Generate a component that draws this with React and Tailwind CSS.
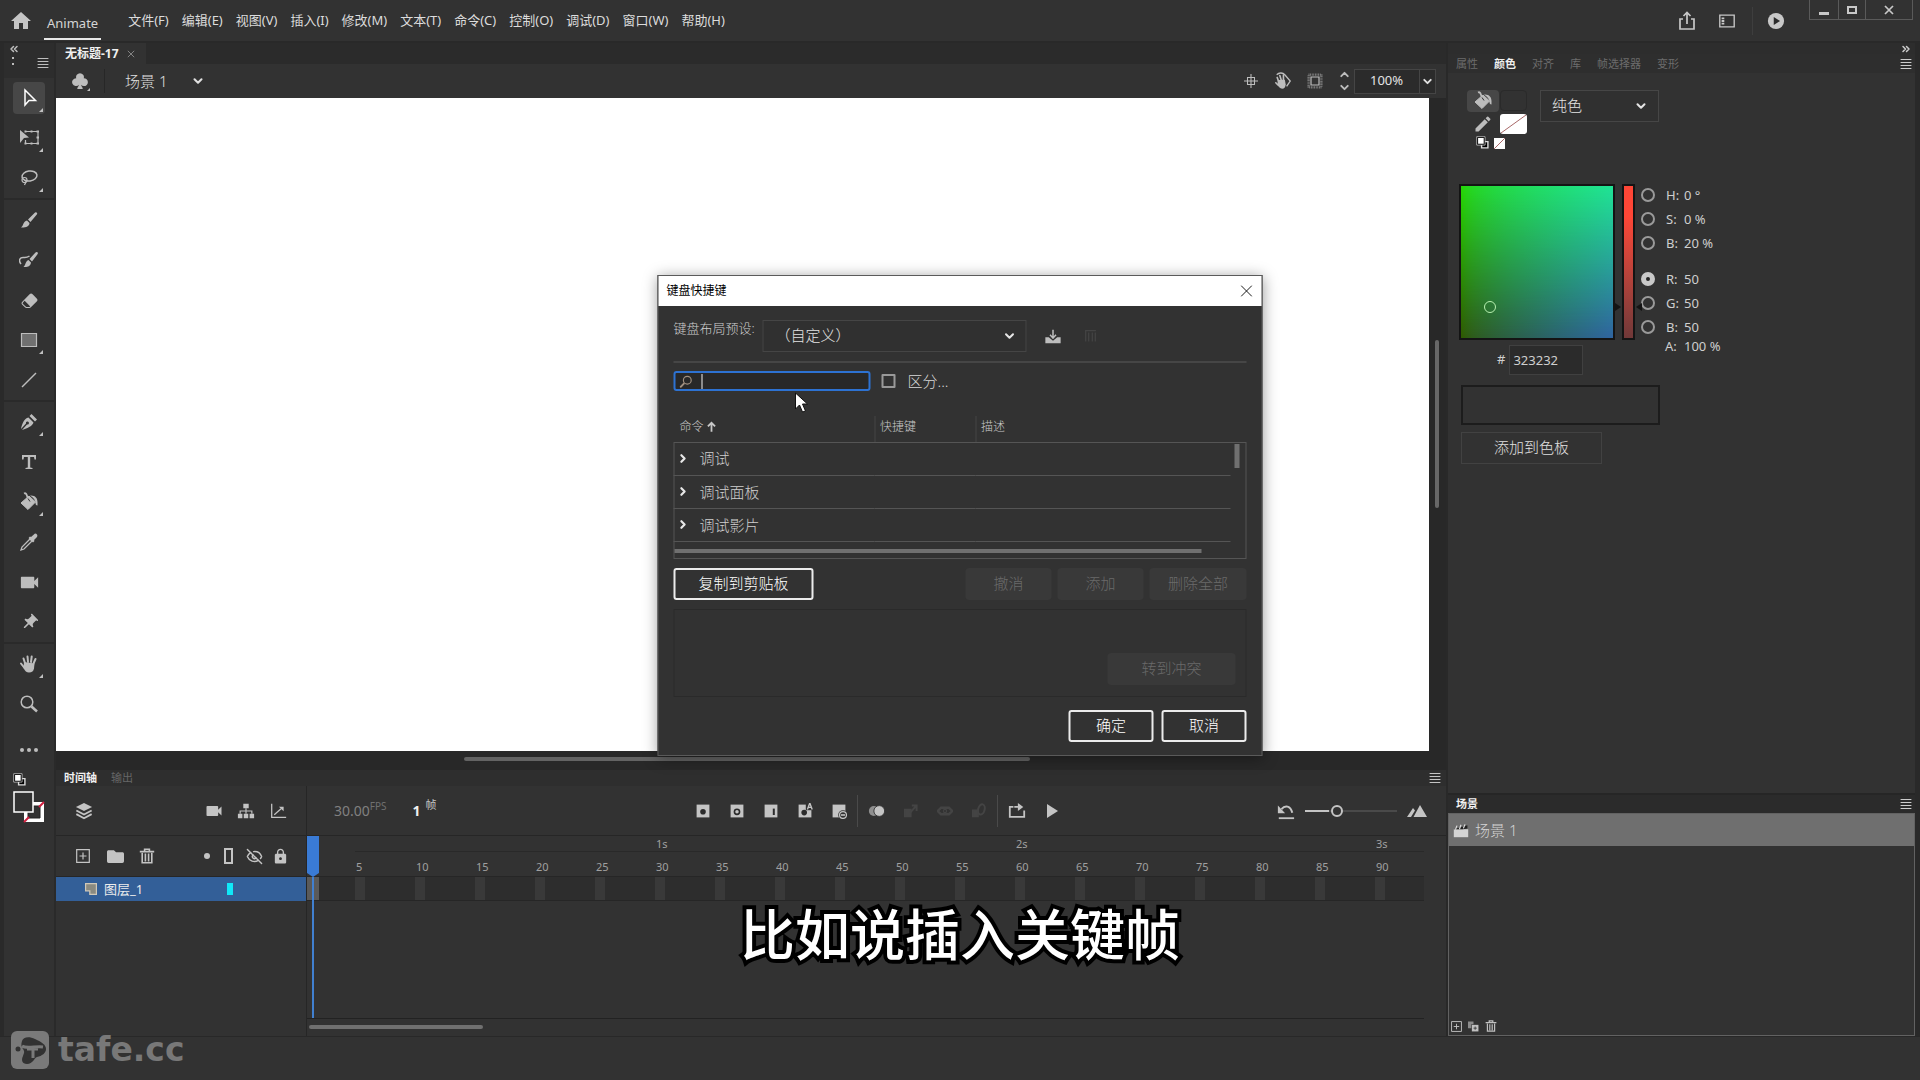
import React, { useState } from 'react';
import { BsSuitClubFill, BsEraserFill } from 'react-icons/bs';
import { FaFolder } from 'react-icons/fa';
import { MdHome, MdVideocam, MdLock, MdPushPin, MdEdit, MdPlayArrow } from 'react-icons/md';
import { ChevronDown, ChevronRight, ChevronUp, ChevronsLeft, ChevronsRight, EyeOff } from 'lucide-react';

const menus = ['文件(F)', '编辑(E)', '视图(V)', '插入(I)', '修改(M)', '文本(T)', '命令(C)', '控制(O)', '调试(D)', '窗口(W)', '帮助(H)'];
const panelTabs = ['属性', '颜色', '对齐', '库', '帧选择器', '变形'];
const commands = ['调试', '调试面板', '调试影片'];
const marks = [5, 10, 15, 20, 25, 30, 35, 40, 45, 50, 55, 60, 65, 70, 75, 80, 85, 90];

const Glyph = ({ size = 20, children, className }) => (
  <svg width={size} height={size} viewBox="0 0 20 20" fill="none" stroke="currentColor" strokeWidth="1.5" className={className}>
    {children}
  </svg>
);

/* Tool icons */
const ArrowIcon = () => <Glyph><path d="M6 2v15l4-4.500h6.500z" stroke="#fff" /></Glyph>;
const TransformIcon = () => (
  <Glyph>
    <path d="M1 2l9 7.500-5 .5-4 5z" fill="currentColor" stroke="none" />
    <path d="M6 3.500h13v12H6.500V12M8 3.500" strokeWidth="1.200" />
    <path d="M5.500 2.500h2v2h-2zM11.500 2.500h2v2h-2zM17.500 2.500H20v2h-2.500zM17.500 8.500H20v2h-2.500zM17.500 14.500H20v2h-2.500zM11.500 14.500h2v2h-2zM5.500 14.500h2v2h-2z" fill="currentColor" stroke="none" />
  </Glyph>
);
const LassoIcon = () => (
  <Glyph>
    <ellipse cx="10.500" cy="8" rx="7.500" ry="5" transform="rotate(-8 10.500 8)" />
    <circle cx="5.500" cy="12" r="2.500" strokeWidth="1.200" />
    <path d="M7 12c1 2-1 3-1.500 5" strokeWidth="1.200" />
  </Glyph>
);
const BrushIcon = () => (
  <Glyph>
    <path d="M17.500 2.500c1 .6.8 1.200.3 2L11.500 12 9 9.500l6.500-6.600c.7-.7 1.300-.9 2-.4zM8 10.500l2.500 2.500c0 3.500-4 4.800-8.500 4.500 2.500-1.500 2-6 6-7z" fill="currentColor" stroke="none" />
  </Glyph>
);
const ArtBrushIcon = () => (
  <Glyph>
    <path d="M2 14C-1 10 1 7 5 7.500c2 .2 4-.5 5.500-1.500" />
    <path d="M18 2c1.200.5 1 1.500.5 2.200L13 11.500 10.500 9l6-6.500c.5-.5 1-.7 1.500-.5zM9.500 10l2.500 2.500c-.2 3.500-3.500 5-7.500 4.500 2-1.500 2-6 5-7z" fill="currentColor" stroke="none" />
  </Glyph>
);
const RectIcon = () => <Glyph><path d="M2.500 3.500h15v13h-15z" fill="#707070" strokeWidth="1.200" /></Glyph>;
const LineIcon = () => <Glyph><path d="M3 17L17 3" /></Glyph>;
const PenIcon = () => (
  <Glyph>
    <path d="M12.500 2l5.500 5.500-2 2L10.500 4zM9.500 5.500l5 5C13.500 14 9 16 3 18l5-5.500a1.500 1.500 0 1 0-1-1L2 17C3 12 5 6.500 9.500 5.500z" fill="currentColor" stroke="none" />
  </Glyph>
);
const TypeIcon = () => (
  <Glyph><path d="M3 3h14v4.500h-1.500L15 5h-3.800v10.500l2.300.5v1h-7v-1l2.300-.5V5H5l-.5 2.500H3z" fill="currentColor" stroke="none" /></Glyph>
);
const BucketIcon = () => (
  <Glyph>
    <path d="M10 4l6.500 6L9 17.500 2 11z" fill="currentColor" strokeLinejoin="round" strokeWidth="1" />
    <path d="M5 1.500c1-.5 2 0 2.500 1L9 6.500" strokeWidth="1.800" />
    <path d="M9 6.500l2 3" stroke="#323232" strokeWidth="1" />
    <path d="M11 3.500c5-.5 7.500 2.500 7.500 6.500v3.500c-1.500 0-2-1-2-2.500 0-3-2-5-5.500-7.500z" fill="currentColor" stroke="none" />
  </Glyph>
);
const DropperIcon = () => (
  <Glyph>
    <path d="M11 7l2 2-8 8-3 1 1-3z" strokeWidth="1.300" />
    <path d="M16 1.500c2 0 3 2 2 3.500l-3 3 .5 1-1.500 1.500L9.500 6 11 4.500l1 .5z" fill="currentColor" stroke="none" />
  </Glyph>
);
const HandIcon = ({ size = 20 }) => (
  <Glyph size={size}>
    <path d="M6 9L4.500 4.500M9 8L8.500 2.500M12 8l.7-5.500M14.500 9.500l2-4.500M5.500 14L2 9.500" strokeWidth="2" strokeLinecap="round" />
    <path d="M5 8l10.500 1.500-.5 5c-.5 2.500-2 4-5 4-2.500 0-4-1.500-5.500-4.500z" fill="currentColor" stroke="none" />
  </Glyph>
);
const ZoomIcon = () => <Glyph><circle cx="8" cy="8" r="5.800" /><path d="M12.500 12.500L18 17.500" strokeWidth="2.500" /></Glyph>;
const SwapIcon = () => (
  <Glyph size={14}>
    <path d="M8 8h9v9H8z" fill="#000" stroke="#ddd" strokeWidth="2" />
    <path d="M2 2h10v10H2z" fill="#fff" stroke="#000" strokeWidth="2" />
    <path d="M1 1h12v12H1z" stroke="#ddd" strokeWidth="1" />
  </Glyph>
);

/* Panel icons */
const MenuIcon = () => <Glyph size={12}><path d="M1 2.500h18M1 7.500h18M1 12.500h18M1 17.500h18" strokeWidth="1.800" /></Glyph>;
const PlusBox = ({ size = 14 }) => <Glyph size={size}><path d="M1 1h18v18H1zM10 5v10M5 10h10" strokeWidth="1.700" /></Glyph>;
const TrashIcon = ({ size = 16 }) => (
  <Glyph size={size}>
    <path d="M1 4.500h18M7 4V1.500h6V4" strokeWidth="2" />
    <path d="M4 6v12.500h12V6M8 7v10M12 7v10" strokeWidth="2" />
  </Glyph>
);
const LayersIcon = () => (
  <Glyph size={18}>
    <path d="M10 1l9 4.500-9 4.500-9-4.500z" fill="currentColor" stroke="none" />
    <path d="M1.500 9.500L10 14l8.500-4.500M1.500 13.500L10 18l8.500-4.500" strokeWidth="2" />
  </Glyph>
);
const TreeIcon = () => (
  <Glyph size={18}>
    <path d="M7 2h6v5H7zM1 13h5v5H1zM7.500 13h5v5h-5zM14 13h5v5h-5z" fill="currentColor" stroke="none" />
    <path d="M10 7v6M3.500 13v-3h13v3" strokeWidth="1.300" />
  </Glyph>
);
const GraphIcon = () => (
  <Glyph size={17}><path d="M2 2v16h17" /><path d="M5 15l8-7" /><path d="M10.500 5.500H16V11z" fill="currentColor" stroke="none" /></Glyph>
);
const KeyframeIcon = ({ kind }) => (
  <Glyph size={16}>
    <path d="M2 2h16v16H2z" fill="currentColor" stroke="none" />
    {kind === 'key' && <circle cx="10" cy="11" r="3.500" fill="#2b2b2b" stroke="none" />}
    {kind === 'blank' && <circle cx="10" cy="11" r="3.200" stroke="#2b2b2b" strokeWidth="2" />}
    {kind === 'frame' && <path d="M13.500 7v8" stroke="#2b2b2b" strokeWidth="2.500" />}
    {kind === 'auto' && (
      <>
        <path d="M11 0h9v9h-9z" fill="#323232" stroke="none" />
        <circle cx="9" cy="12" r="3.500" fill="#2b2b2b" stroke="none" />
        <path d="M13 8l3-8 3 8M14 5.500h4" strokeWidth="1.700" />
      </>
    )}
    {kind === 'remove' && (
      <>
        <circle cx="15" cy="15" r="6" fill="#323232" stroke="none" />
        <circle cx="15" cy="15" r="4.300" strokeWidth="1.600" />
        <path d="M12.500 15h5" strokeWidth="2" />
      </>
    )}
  </Glyph>
);
const OnionIcon = () => (
  <Glyph size={18}>
    <circle cx="6.500" cy="10" r="5.500" fill="#8f8f8f" stroke="none" />
    <circle cx="12.500" cy="10" r="6" fill="currentColor" stroke="#323232" strokeWidth="1" />
  </Glyph>
);
const ClassicTweenIcon = () => (
  <Glyph size={16}><path d="M2 8h8v9H2z" fill="currentColor" /><path d="M11 3h6v7M9 12l8-9" strokeWidth="2.500" /></Glyph>
);
const MotionTweenIcon = () => (
  <Glyph size={16}><path d="M1 10l4-4h10l4 4-4 4H5z" strokeWidth="3" /><circle cx="10" cy="10" r="2" /></Glyph>
);
const ShapeTweenIcon = () => (
  <Glyph size={16}><path d="M2 9h7v8H2z" fill="currentColor" /><ellipse cx="13" cy="8" rx="4" ry="6.500" transform="rotate(15 13 8)" strokeWidth="2.500" /></Glyph>
);
const LoopIcon = () => (
  <Glyph size={18}><path d="M6 5.500H2v11h16v-7M7 5.500h6" strokeWidth="2" /><path d="M11 1l6 4.500-6 4.500z" fill="currentColor" stroke="none" /></Glyph>
);
const ResetIcon = () => (
  <Glyph size={18}><path d="M2 18h17" strokeWidth="2" /><path d="M5 8c4-5 10-4 12 4" strokeWidth="2.200" /><path d="M1 4v8.500h8z" fill="currentColor" stroke="none" /></Glyph>
);
const MountainIcon = () => (
  <Glyph size={20}><path d="M6.500 16L13 4l7 12zM0 16l6-9 2 2.500L4 16z" fill="currentColor" stroke="none" /></Glyph>
);
const ShareIcon = () => <Glyph><path d="M6 8H3v10h14V8h-3" strokeWidth="1.700" /><path d="M10 13V2M6.500 5L10 1.500 13.500 5" strokeWidth="1.700" /></Glyph>;
const WorkspaceIcon = () => (
  <Glyph size={18}><path d="M2 3.500h16v13H2z" /><path d="M4 6h3v2H4zM4 9h3v2H4zM4 12h3v2H4z" fill="currentColor" stroke="none" /></Glyph>
);
const SearchIcon = () => (
  <Glyph size={13}><circle cx="12" cy="8" r="6" strokeWidth="1.800" /><path d="M7.500 12.500L1 19" strokeWidth="3" /></Glyph>
);
const ClapperIcon = () => (
  <Glyph size={16}>
    <path d="M1 9h18v10H1z" fill="currentColor" stroke="none" />
    <path d="M1 9l17-5v4l-6 1z" fill="#222" stroke="none" />
    <path d="M3 9.500l2-5M8 9l2-5.500M13 8l2-5" stroke="#ddd" strokeWidth="1.500" />
  </Glyph>
);
const LogoIcon = () => (
  <svg width="40" height="40" viewBox="0 0 40 40" fill="none">
    <rect x="1" y="1" width="38" height="38" rx="6" fill="#7a7a7a" />
    <circle cx="8" cy="19" r="2.500" fill="#323232" />
    <path d="M12 11c1-4 7-5 13-2 7 3 11 6 11 10s-4 7-9 8c-3 1-4 7-10 7-5 0-6-4-4-8 1-3 2-4 0-7-2-2-2-5-1-8z" fill="#323232" />
    <path d="M12 16c4 3 14 0 21 1M17 19h11M23 19v9" stroke="#7a7a7a" strokeWidth="3" />
  </svg>
);

const tools = [
  [
    { name: '选择工具', icon: <ArrowIcon />, more: true, active: true },
    { name: '任意变形工具', icon: <TransformIcon />, more: true },
    { name: '套索工具', icon: <LassoIcon />, more: true },
  ],
  [
    { name: '流畅画笔', icon: <BrushIcon /> },
    { name: '传统画笔', icon: <ArtBrushIcon /> },
    { name: '橡皮擦', icon: <BsEraserFill size={17} /> },
    { name: '矩形工具', icon: <RectIcon />, more: true },
    { name: '线条工具', icon: <LineIcon /> },
  ],
  [
    { name: '钢笔工具', icon: <PenIcon />, more: true },
    { name: '文本工具', icon: <TypeIcon /> },
    { name: '颜料桶', icon: <BucketIcon />, more: true },
    { name: '滴管工具', icon: <DropperIcon /> },
    { name: '摄像头', icon: <MdVideocam size={23} /> },
    { name: '资源变形工具', icon: <MdPushPin size={19} className="rotate-45" /> },
  ],
  [
    { name: '手形工具', icon: <HandIcon />, more: true },
    { name: '缩放工具', icon: <ZoomIcon /> },
  ],
];

const MoreMark = () => <span className="absolute right-[2px] bottom-[2px] border-l-4 border-b-4 border-l-transparent border-b-[#c0c0c0]" />;

const Header = () => (
  <header className="flex h-[43px] shrink-0 border-b-2 border-[#292929]">
    <div className="flex items-center">
      <button aria-label="主页" className="ml-[9px] mt-px text-[#c4c4c4]"><MdHome size={24} /></button>
      <span className="ml-[11px] mt-1 flex h-[35px] items-center border-b-2 border-[#e8e8e8] px-[3px] pt-1 text-[13px] text-[#d5d5d5]">Animate</span>
      <nav className="mb-px ml-[27px] flex gap-[13px] text-[13px] leading-[18px] text-[#dcdcdc]">
        {menus.map(item => <button key={item}>{item}</button>)}
      </nav>
    </div>
    <div className="ml-auto flex items-center text-[#c8c8c8]">
      <button aria-label="共享"><ShareIcon /></button>
      <button aria-label="工作区" className="ml-[21px]"><WorkspaceIcon /></button>
      <span className="ml-4 h-7 w-px bg-[#3e3e3e]" />
      <button aria-label="播放影片" className="mr-[24px] ml-[14px]">
        <Glyph size={18}><circle cx="10" cy="10" r="9" fill="currentColor" stroke="none" /><path d="M7.500 5.500l7 4.500-7 4.500z" fill="#2b2b2b" stroke="none" /></Glyph>
      </button>
      <div className="mr-[7px] flex h-5 self-start border-x border-b border-[#5a5a5a]">
        <button aria-label="最小化" className="flex w-7 items-center justify-center pt-2"><span className="h-[3px] w-[10px] bg-[#c8c8c8]" /></button>
        <button aria-label="最大化" className="flex w-7 items-center justify-center border-x border-[#5a5a5a]"><span className="h-2 w-[10px] border-2 border-[#c8c8c8]" /></button>
        <button aria-label="关闭" className="flex w-[46px] items-center justify-center">
          <Glyph size={10}><path d="M2 2l16 16M18 2L2 18" strokeWidth="3.500" /></Glyph>
        </button>
      </div>
    </div>
  </header>
);

const Toolbar = () => (
  <aside className="flex w-14 shrink-0 flex-col border-l-4 border-r-2 border-[#2a2a2a] text-[#bdbdbd]">
    <button aria-label="折叠" className="flex h-[11px] items-center bg-[#2d2d2d] pl-1"><ChevronsLeft size={12} strokeWidth={3} /></button>
    <div className="flex h-[24px] items-start justify-between bg-[#2d2d2d] pt-[3px] pr-[5px] pl-2">
      <span className="h-2 w-[2px] border-y-2 border-[#bdbdbd]" />
      <MenuIcon />
    </div>
    {tools.map((group, index) => (
      <div key={index} className={index ? 'border-t-2 border-[#2a2a2a]' : ''}>
        {group.map(tool => (
          <div key={tool.name} className="flex h-10 items-center justify-center">
            <button aria-label={tool.name} className={tool.active ? 'relative flex size-8 items-center justify-center rounded-sm bg-[#474747]' : 'relative flex size-8 items-center justify-center'}>
              {tool.icon}
              {tool.more && <MoreMark />}
            </button>
          </div>
        ))}
      </div>
    ))}
    <button aria-label="更多" className="flex h-[52px] items-center justify-center gap-[3px]">
      <span className="size-1 rounded-full bg-current" />
      <span className="size-1 rounded-full bg-current" />
      <span className="size-1 rounded-full bg-current" />
    </button>
    <div className="mt-[-3px] pl-[9px]"><SwapIcon /></div>
    <div className="mt-1 pl-[9px]">
      <svg width="32" height="34" viewBox="0 0 32 34">
        <path d="M11 11h20v20H11z" fill="#fff" />
        <path d="M15 15h12v12H15z" fill="#323232" stroke="#222" />
        <path d="M11 31l5-5M26 16l5-5" stroke="#d02040" strokeWidth="2" />
        <path d="M1 1h19v20H1z" fill="#323232" stroke="#fff" strokeWidth="1.500" />
      </svg>
    </div>
  </aside>
);

const Stage = () => (
  <section className="flex min-h-0 flex-1 flex-col bg-[#282828]">
    <div className="flex h-[21px] shrink-0 bg-[#2b2b2b]">
      <div className="flex items-center gap-[8px] bg-[#323232] pr-[11px] pl-[9px] text-[12px] leading-4 font-bold text-[#f0f0f0]">
        无标题-17
        <button aria-label="关闭标签" className="text-[#999]"><Glyph size={8}><path d="M2 2l16 16M18 2L2 18" strokeWidth="2" /></Glyph></button>
      </div>
    </div>
    <div className="flex h-[34px] shrink-0 items-center bg-[#323232] pr-[10px] text-[#bdbdbd]">
      <button aria-label="编辑元件" className="relative ml-[15px]">
        <BsSuitClubFill size={18} />
        <span className="absolute -right-px -bottom-px border-l-[3px] border-b-[3px] border-l-transparent border-b-[#c0c0c0]" />
      </button>
      <span className="ml-[15px] h-6 w-px bg-[#272727]" />
      <button className="ml-5 flex items-center gap-6 text-[15px] leading-5 font-light text-[#e0e0e0]">
        场景 1
        <ChevronDown size={14} strokeWidth={3.500} />
      </button>
      <div className="ml-auto flex items-center">
        <button aria-label="居中舞台"><Glyph size={14}><path d="M5 5h10v10H5zM10 0v20M0 10h20" /></Glyph></button>
        <button aria-label="旋转工具" className="ml-4">
          <Glyph size={18}>
            <path d="M5 10L3.500 6M8 9L6.500 4M10.500 9l0-5.500M5 15L2 12" strokeWidth="1.800" strokeLinecap="round" />
            <path d="M4 9l8-.5 1 5c0 3-1.500 5-4 5S5.500 17 4 14z" fill="currentColor" stroke="none" />
            <path d="M3 3c3-3 7-2 9 0l6 7-4 6" />
          </Glyph>
        </button>
        <button aria-label="剪切" className="ml-[15px]"><Glyph size={16}><path d="M2 2h16v16H2z" stroke="#8a8a8a" strokeWidth="3" strokeDasharray="1 1" /><path d="M5 5h10v10H5z" /></Glyph></button>
        <div className="ml-[15px] flex flex-col">
          <button aria-label="放大"><ChevronUp size={13} strokeWidth={3.500} /></button>
          <button aria-label="缩小"><ChevronDown size={13} strokeWidth={3.500} /></button>
        </div>
        <div className="ml-[3px] flex h-[25px] border border-[#454545] bg-[#2b2b2b]">
          <input aria-label="缩放" defaultValue="100%" className="w-[64px] pl-[15px] text-[13px] text-[#e4e4e4] outline-none" />
          <button aria-label="缩放列表" className="flex w-4 items-center justify-center border-l border-[#454545] text-[#e0e0e0]"><ChevronDown size={13} strokeWidth={3.500} /></button>
        </div>
      </div>
    </div>
    <div className="flex min-h-0 flex-1">
      <div className="flex-1 bg-white" />
      <div className="w-[17px] pt-[242px] pl-[6px]"><div className="h-[168px] w-1 rounded-full bg-[#686868]" /></div>
    </div>
    <div className="h-[19px] shrink-0 pt-[6px] pl-[408px]"><div className="h-1 w-[566px] rounded-full bg-[#636363]" /></div>
  </section>
);

const IconButton = ({ label, children, disabled }) => (
  <button aria-label={label} disabled={disabled} className="flex h-8 w-[34px] items-center justify-center text-[#c4c4c4] disabled:text-[#444]">{children}</button>
);

const Timeline = () => {
  const [zoom, setZoom] = useState(33);

  return (
    <section className="flex h-[266px] shrink-0 flex-col text-[#c4c4c4]">
      <div className="flex h-4 items-center gap-[14px] bg-[#2e2e2e] pr-[5px] pl-2 text-[11px] leading-4">
        <button className="font-bold text-[#f0f0f0]">时间轴</button>
        <button className="text-[#666]">输出</button>
        <span className="ml-auto"><MenuIcon /></span>
      </div>
      <div className="flex min-h-0 flex-1">
        <div className="flex w-[251px] shrink-0 flex-col border-r border-[#262626]">
          <div className="flex h-[50px] items-center border-b border-[#262626] pl-[19px]">
            <button aria-label="图层"><LayersIcon /></button>
            <button aria-label="摄像头" className="ml-[111px]"><MdVideocam size={20} /></button>
            <button aria-label="父级视图" className="ml-[13px]"><TreeIcon /></button>
            <button aria-label="图层深度" className="ml-[15px]"><GraphIcon /></button>
          </div>
          <div className="flex h-[41px] items-center border-b border-[#262626] pl-5">
            <button aria-label="新建图层"><PlusBox size={14} /></button>
            <button aria-label="新建文件夹" className="ml-[17px]"><FaFolder size={17} /></button>
            <button aria-label="删除" className="ml-[15px]"><TrashIcon size={16} /></button>
            <span className="ml-[49px] size-[6px] rounded-full bg-[#c4c4c4]" />
            <button aria-label="轮廓" className="ml-[14px] h-4 w-[9px] border-2 border-[#c4c4c4]" />
            <button aria-label="隐藏" className="ml-[13px]"><EyeOff size={17} strokeWidth={2} /></button>
            <button aria-label="锁定" className="ml-[9px]"><MdLock size={17} /></button>
          </div>
          <div className="flex h-[24px] items-center bg-[#335f98] pl-[29px] text-[13px] leading-5 text-[#ececec]">
            <Glyph size={12}><path d="M1 1h18v18H8v-6H1z" fill="#8a8a80" stroke="#d0c8b8" strokeWidth="2" /></Glyph>
            <span className="ml-[7px] w-[123px]">图层_1</span>
            <span className="h-3 w-[6px] bg-[#10e8f8]" />
          </div>
        </div>
        <div className="flex min-w-0 flex-1 flex-col">
          <div className="grid h-[50px] grid-cols-[1fr_auto_1fr] items-center border-b border-[#262626]">
            <div className="flex items-center pl-[27px] text-[14px] leading-5">
              <span className="text-[#808080]">30.00</span>
              <sup className="text-[10px] text-[#707070]">FPS</sup>
              <span className="ml-[26px] font-bold text-[#f0f0f0]">1</span>
              <sup className="ml-[5px] text-[11px]">帧</sup>
            </div>
            <div className="flex items-center">
              <IconButton label="插入关键帧"><KeyframeIcon kind="key" /></IconButton>
              <IconButton label="插入空白关键帧"><KeyframeIcon kind="blank" /></IconButton>
              <IconButton label="插入帧"><KeyframeIcon kind="frame" /></IconButton>
              <IconButton label="自动关键帧"><KeyframeIcon kind="auto" /></IconButton>
              <IconButton label="删除帧"><KeyframeIcon kind="remove" /></IconButton>
              <span className="mr-[2px] ml-px h-8 w-px bg-[#4a4a4a]" />
              <IconButton label="绘图纸外观"><OnionIcon /></IconButton>
              <IconButton label="传统补间" disabled><ClassicTweenIcon /></IconButton>
              <IconButton label="补间动画" disabled><MotionTweenIcon /></IconButton>
              <IconButton label="形状补间" disabled><ShapeTweenIcon /></IconButton>
              <span className="mr-[2px] ml-px h-8 w-px bg-[#4a4a4a]" />
              <IconButton label="循环"><LoopIcon /></IconButton>
              <IconButton label="播放"><MdPlayArrow size={24} /></IconButton>
            </div>
            <div className="flex items-center justify-end pr-[19px]">
              <button aria-label="重置缩放"><ResetIcon /></button>
              <div className="relative mx-[10px] flex h-4 w-[92px] items-center">
                <span className="absolute inset-x-0 h-[2px] bg-[#4a4a4a]" />
                <span className="absolute left-0 h-[2px] w-6 bg-[#c4c4c4]" />
                <input
                  type="range"
                  aria-label="时间轴缩放"
                  value={zoom}
                  onChange={(e) => setZoom(e.target.value)}
                  className="relative w-full appearance-none bg-transparent [&::-webkit-slider-thumb]:size-3 [&::-webkit-slider-thumb]:appearance-none [&::-webkit-slider-thumb]:rounded-full [&::-webkit-slider-thumb]:border-2 [&::-webkit-slider-thumb]:border-[#c4c4c4] [&::-webkit-slider-thumb]:bg-[#323232]"
                />
              </div>
              <button aria-label="适合窗口"><MountainIcon /></button>
            </div>
          </div>
          <div className="relative mr-[22px] flex-1 overflow-hidden border-b border-[#222] text-[11px] text-[#a0a0a0]">
            {/* Ruler */}
            <div className="flex h-[41px] border-b border-[#262626] pl-12">
              {marks.map(mark => (
                <div key={mark} className="w-[60px] shrink-0">
                  <div className="h-4 border-b border-[#292929] pl-px leading-4">{mark % 30 === 0 && `${mark / 30}s`}</div>
                  <div className="pl-px leading-[29px]">{mark}</div>
                </div>
              ))}
            </div>
            {/* Frames */}
            <div className="flex h-6 border-b border-[#262626] bg-[#2d2d2d]">
              <div className="flex w-12 shrink-0"><span className="w-3 bg-[#5a5a5a]" /></div>
              {marks.map(mark => (
                <div key={mark} className="flex w-[60px] shrink-0"><span className="w-[10px] bg-[#393939]" /></div>
              ))}
            </div>
            <div className="absolute top-0 left-0 flex h-full w-3 flex-col items-center">
              <svg width="12" height="41" viewBox="0 0 12 41"><path d="M0 0h12v37l-6 4-6-4z" fill="#3a7bd5" /></svg>
              <span className="w-[2px] flex-1 bg-[#4180d0]" />
            </div>
          </div>
          <div className="h-[17px] pt-[6px] pl-[2px]"><div className="h-1 w-[174px] rounded-full bg-[#707070]" /></div>
        </div>
      </div>
    </section>
  );
}

const ColorRadio = ({ name, value, unit }) => (
  <label className="flex h-6 items-center text-[13px] leading-4 text-[#cfcfcf]">
    <input
      type="radio"
      name="channel"
      defaultChecked={name === 'R'}
      className="size-[14px] appearance-none rounded-full border-2 border-[#9a9a9a] checked:border-[5px] checked:border-[#c8c8c8] checked:bg-[#222]"
    />
    <span className="ml-[11px] w-[18px]">{name}:</span>
    {value} {unit}
  </label>
);

const ColorPanel = () => (
  <section className="flex min-h-0 flex-1 flex-col">
    <button aria-label="折叠面板" className="flex h-[11px] shrink-0 items-center justify-end bg-[#2d2d2d] pr-[3px] text-[#ccc]"><ChevronsRight size={12} strokeWidth={3} /></button>
    <div className="flex h-[19px] shrink-0 items-center gap-4 bg-[#2e2e2e] pr-[3px] pl-2 text-[11px] leading-4 text-[#6c6c6c]">
      {panelTabs.map(tab => (
        <button key={tab} className={tab === '颜色' ? 'font-bold text-[#f0f0f0]' : ''}>{tab}</button>
      ))}
      <span className="ml-auto text-[#ccc]"><MenuIcon /></span>
    </div>
    <div className="flex h-[110px] items-start pt-[17px] pl-[19px] text-[#bdbdbd]">
      <div className="flex w-[61px] flex-col gap-[2px]">
        <div className="flex gap-px">
          <button aria-label="填充颜色" className="flex h-[22px] w-8 items-center justify-center rounded-sm bg-[#474747]"><BucketIcon /></button>
          <span className="h-[21px] w-[27px] rounded-sm border border-[#2a2a2a] bg-[#323232]" />
        </div>
        <div className="flex gap-px">
          <button aria-label="笔触颜色" className="flex h-5 w-8 items-center justify-center"><MdEdit size={20} /></button>
          <svg width="27" height="20"><rect width="27" height="20" rx="3" fill="#fff" /><path d="M1 19L26 1" stroke="#a86868" /></svg>
        </div>
        <div className="flex items-center gap-1 pl-[9px]">
          <SwapIcon />
          <svg width="11" height="11"><path d="M0 0h11v11H0z" fill="#fff" /><path d="M0 11L11 0" stroke="#a86868" /></svg>
        </div>
      </div>
      <div className="relative ml-3 h-8 w-[119px]">
        <select aria-label="颜色类型" className="h-full w-full appearance-none border border-[#464646] bg-[#303030] pb-px pl-[11px] text-[15px] font-light text-[#e4e4e4]">
          <option>纯色</option>
        </select>
        <ChevronDown size={14} strokeWidth={3.500} className="absolute top-[9px] right-[11px] text-[#e4e4e4]" />
      </div>
    </div>
    <div className="flex pl-[11px]">
      <div>
        <div className="flex gap-[7px] pt-px">
          <div className="relative size-[156px] border-2 border-[#141414] bg-linear-to-r from-[#2f5a00] to-[#3064a0]">
            <div className="size-full bg-linear-to-r from-[#26d800] to-[#20e495] [mask-image:linear-gradient(black,transparent)]" />
            <span className="absolute top-[115px] left-[23px] size-3 rounded-full border-[1px] border-[#b8f0b0]" />
          </div>
          <div className="relative w-[13px] border-2 border-[#141414] bg-linear-to-b from-[#ff4636] from-20% to-[#703838]">
            <span className="absolute top-[117px] left-[-9px] border-y-4 border-l-[6px] border-y-transparent border-l-[#141414]" />
            <span className="absolute top-[117px] right-[-9px] border-y-4 border-r-[6px] border-y-transparent border-r-[#141414]" />
          </div>
        </div>
        <label className="mt-[5px] flex items-center gap-1 pl-[38px] text-[13px] text-[#cfcfcf]">
          #
          <input defaultValue="323232" className="h-[30px] w-[74px] border border-[#404040] bg-[#2b2b2b] pl-[3px] outline-none" />
        </label>
      </div>
      <div className="ml-[6px]">
        <ColorRadio name="H" value="0" unit="°" />
        <ColorRadio name="S" value="0" unit="%" />
        <ColorRadio name="B" value="20" unit="%" />
        <div className="h-3" />
        <ColorRadio name="R" value="50" />
        <ColorRadio name="G" value="50" />
        <ColorRadio name="B" value="50" />
        <div className="flex h-4 items-center pl-6 text-[13px] text-[#cfcfcf]"><span className="w-[19px]">A:</span>100 %</div>
      </div>
    </div>
    <div className="mt-[10px] ml-[13px] h-[40px] w-[199px] border-2 border-[#1c1c1c]" />
    <button className="mt-[7px] ml-[13px] h-8 w-[141px] border border-[#424242] pb-[2px] text-[15px] font-light text-[#e0e0e0]">添加到色板</button>
  </section>
);

const ScenePanel = () => (
  <section className="flex h-[243px] shrink-0 flex-col border-t-2 border-[#262626]">
    <div className="flex h-[18px] items-center justify-between bg-[#2b2b2b] pr-[3px] pl-2 text-[11px] leading-4 font-bold text-[#f0f0f0]">
      场景
      <span className="text-[#ccc]"><MenuIcon /></span>
    </div>
    <div className="flex flex-1 flex-col border border-[#626262]">
      <button className="flex h-8 items-center gap-[6px] bg-[#6f6f6f] pl-1 text-[15px] leading-5 font-light text-[#d4d4d4]">
        <ClapperIcon />
        场景 1
      </button>
      <div className="mt-auto flex items-center gap-[6px] pb-[3px] pl-[2px] text-[#c0c0c0]">
        <button aria-label="添加场景"><PlusBox size={11} /></button>
        <button aria-label="复制场景"><Glyph size={11}><path d="M0 1h10v5H6v7H0z" fill="#8c8c8c" stroke="none" /><path d="M7 7h12v12H7z" fill="currentColor" stroke="none" /><path d="M13 10v6M10 13h6" stroke="#333" strokeWidth="1.500" /></Glyph></button>
        <button aria-label="删除场景"><TrashIcon size={12} /></button>
      </div>
    </div>
  </section>
);

const DisabledButton = ({ className, children }) => (
  <button disabled className={`h-8 rounded-sm bg-[#393939] pb-px text-[15px] font-light text-[#6a6a6a] ${className}`}>{children}</button>
);

const OutlineButton = ({ className, children }) => (
  <button className={`h-8 rounded-[3px] border-2 border-[#ececec] pb-[2px] text-[15px] font-light text-white ${className}`}>{children}</button>
);

const ShortcutDialog = () => (
  <div role="dialog" aria-label="键盘快捷键" className="absolute top-[275px] left-1/2 w-[605px] -translate-x-1/2 border border-[#5a5a5a] bg-[#323232] shadow-[0_2px_14px_rgba(0,0,0,0.4)]">
    <div className="flex h-[30px] items-center justify-between bg-white pr-[9px] pl-2 text-[12px] leading-4 text-black">
      键盘快捷键
      <button aria-label="关闭"><Glyph size={12}><path d="M1 1l18 18M19 1L1 19" /></Glyph></button>
    </div>
    <div className="px-[15px] pt-[14px] pb-[13px]">
      <div className="flex h-8 items-center">
        <label htmlFor="preset" className="mb-4 w-[89px] text-[13px] leading-5 font-light whitespace-nowrap text-[#cfcfcf]">键盘布局预设:</label>
        <div className="relative h-8 w-[264px]">
          <select id="preset" className="h-full w-full appearance-none border border-[#454545] bg-[#303030] pb-[2px] pl-3 text-[15px] font-light text-[#e4e4e4]">
            <option>（自定义）</option>
          </select>
          <ChevronDown size={14} strokeWidth={3.500} className="absolute top-[9px] right-[10px] text-[#e4e4e4]" />
        </div>
        <button aria-label="保存预设" className="ml-[18px] text-[#bdbdbd]">
          <Glyph size={17}><path d="M1 11h4l5 4 5-4h4v7H1z" fill="currentColor" stroke="none" /><path d="M10 2v9M6.500 8L10 12l3.500-4" strokeWidth="1.800" /></Glyph>
        </button>
        <button aria-label="删除预设" disabled className="ml-[23px] text-[#444]"><Glyph size={12}><path d="M1 1h18M2 2v17M7 4v15M13 4v15M18 4v15" strokeWidth="2" /></Glyph></button>
      </div>
      <div className="mt-[9px] h-[2px] bg-[#464646]" />
      <div className="mt-2 flex h-5 items-center">
        <div className="flex h-5 w-[197px] items-center rounded-[3px] border-2 border-[#2d72d2] bg-[#282828] pl-1">
          <span className="text-[#a09080]"><SearchIcon /></span>
          <span className="ml-[9px] h-[15px] w-px bg-[#f0f0f0]" />
          <input aria-label="搜索" className="w-full min-w-0 text-[13px] text-[#e4e4e4] outline-none" />
        </div>
        <label className="ml-[11px] flex items-center gap-3 text-[15px] leading-5 font-light text-[#d8d8d8]">
          <input type="checkbox" className="size-[14px] appearance-none rounded-[1px] border-2 border-[#999]" />
          区分...
        </label>
      </div>
      <div className="relative mt-[25px] h-[143px] pr-4">
        <table className="w-full table-fixed border-collapse text-left">
          <thead className="text-[12px] leading-4 text-[#c8c8c8]">
            <tr className="h-[26px]">
              <th className="w-[201px] pb-1 pl-[6px] font-light">
                <span className="flex items-center gap-[2px]">命令<Glyph size={12}><path d="M10 18V4M4 9l6-6 6 6" strokeWidth="3" /></Glyph></span>
              </th>
              <th className="w-[101px] border-l border-[#454545] pb-1 pl-[5px] font-light">快捷键</th>
              <th className="border-l border-[#454545] pb-1 pl-[5px] font-light">描述</th>
            </tr>
          </thead>
          <tbody className="text-[15px] leading-5 font-light text-[#cfcfcf]">
            {commands.map(command => (
              <tr key={command} className="h-[33px] border-b border-[#555]">
                <td colSpan={3} className="pl-[3px]">
                  <button className="flex items-center gap-[10px]"><ChevronRight size={13} strokeWidth={4} className="text-[#e8e8e8]" />{command}</button>
                </td>
              </tr>
            ))}
          </tbody>
        </table>
        <div className="pointer-events-none absolute inset-x-0 top-[26px] bottom-0 border border-[#555]">
          <span className="absolute top-px right-[6px] h-6 w-[5px] bg-[#707070]" />
          <span className="absolute bottom-[5px] left-0 h-1 w-[527px] bg-[#707070]" />
        </div>
      </div>
      <div className="mt-[9px] flex justify-between">
        <OutlineButton className="w-[140px]">复制到剪贴板</OutlineButton>
        <div className="flex gap-[6px]">
          <DisabledButton className="w-[86px]">撤消</DisabledButton>
          <DisabledButton className="w-[86px]">添加</DisabledButton>
          <DisabledButton className="w-[97px]">删除全部</DisabledButton>
        </div>
      </div>
      <div className="mt-[9px] flex h-[88px] items-end justify-end border border-[#2a2a2a] pr-[10px] pb-[11px]">
        <DisabledButton className="w-[128px]">转到冲突</DisabledButton>
      </div>
      <div className="mt-[13px] flex justify-end gap-2">
        <OutlineButton className="w-[85px]">确定</OutlineButton>
        <OutlineButton className="w-[85px]">取消</OutlineButton>
      </div>
    </div>
    {/* Mouse pointer */}
    <svg width="14" height="21" viewBox="0 0 14 21" className="absolute top-[116px] left-[136px]">
      <path d="M1 1v16l4-4 3 7 3-1-3-7h5z" fill="#fff" stroke="#111" />
    </svg>
  </div>
);

const App = () => (
  <div className="relative flex h-screen flex-col overflow-hidden bg-[#323232] font-['Noto_Sans','Noto_Sans_CJK_SC',sans-serif]">
    <Header />
    <main className="flex min-h-0 flex-1">
      <Toolbar />
      <div className="flex min-w-0 flex-1 flex-col">
        <Stage />
        <Timeline />
      </div>
      <div className="flex w-[474px] shrink-0 flex-col border-r-[5px] border-l-2 border-[#292929]">
        <ColorPanel />
        <ScenePanel />
      </div>
    </main>
    <footer className="h-11 shrink-0 border-t border-[#282828]" />
    <div className="absolute bottom-[10px] left-[10px] flex items-center gap-2 font-['DejaVu_Sans',sans-serif] text-[33px] leading-10 font-bold text-[#787878]">
      <LogoIcon />
      tafe.cc
    </div>
    <ShortcutDialog />
    <p className="absolute bottom-[114px] left-1/2 -translate-x-1/2 text-[55px] leading-[64px] font-medium whitespace-nowrap text-white [-webkit-text-stroke:8px_black] [paint-order:stroke_fill] [stroke-linejoin:round]">
      比如说插入关键帧
    </p>
  </div>
);

export default App;
